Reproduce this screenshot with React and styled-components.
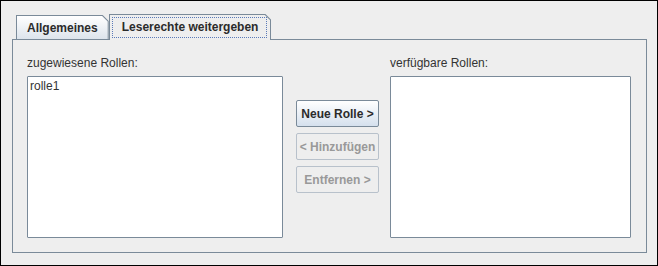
import styled, { createGlobalStyle } from "styled-components";

const GlobalStyle = createGlobalStyle`
  body {
    margin: 0;
    background: #eeeeee;
  }
`;

const Frame = styled.div`
  width: 658px;
  height: 266px;
  box-sizing: border-box;
  border: 1px solid #000;
  background: #eeeeee;
  padding: 12px 10px 12px 11px;
  display: flex;
  flex-direction: column;
  font-family: "Liberation Sans", Arial, sans-serif;
  font-size: 12px;
  color: #333333;
`;

const TabStrip = styled.div`
  height: 26px;
  display: flex;
  align-items: flex-end;
  padding-left: 4px;
  position: relative;
  z-index: 1;
`;

const Tab = styled.div`
  position: relative;
  box-sizing: border-box;
  height: ${({ $active }) => ($active ? "26px" : "24px")};
  margin-bottom: ${({ $active }) => ($active ? "-1px" : "0")};
  padding: 0 ${({ $active }) => ($active ? "13px" : "11px")};
  display: flex;
  align-items: center;
  font-weight: bold;
  color: #2b2b2b;
  background: #7a8a99;
  clip-path: polygon(0 0, calc(100% - 6px) 0, 100% 6px, 100% 100%, 0 100%);

  &::before {
    content: "";
    position: absolute;
    inset: 1px 1px 0 1px;
    background: ${({ $active }) =>
      $active ? "#eeeeee" : "linear-gradient(#ffffff, #dde4ec)"};
    clip-path: polygon(0 0, calc(100% - 5.6px) 0, 100% 5.6px, 100% 100%, 0 100%);
  }
`;

const TabLabel = styled.span`
  position: relative;
  padding-top: ${({ $active }) => ($active ? "0" : "2px")};
`;

const FocusBox = styled.span`
  position: absolute;
  z-index: 1;
  inset: 3px 4px 2px 3px;
  border: 1px dotted #5a7ab8;
  pointer-events: none;
`;

const Panel = styled.div`
  flex: 1;
  border: 1px solid #7a8a99;
  padding: 16px 15px 14px 14px;
  display: flex;
  gap: 13px;
`;

const Column = styled.div`
  width: ${({ $width }) => $width}px;
  display: flex;
  flex-direction: column;
  gap: 6px;
`;

const Label = styled.div`
  height: 14px;
  line-height: 14px;
`;

const ListBox = styled.div`
  flex: 1;
  background: #ffffff;
  border: 1px solid #7a8a99;
  border-radius: 1px;
  padding: 2px 2px;
  line-height: 15px;
  color: #333333;
`;

const ButtonColumn = styled.div`
  width: 83px;
  padding-top: 44px;
  margin-right: -2px;
  display: flex;
  flex-direction: column;
  gap: 6px;
`;

const Button = styled.button`
  height: 27px;
  box-sizing: border-box;
  width: 100%;
  padding: 0;
  font-family: inherit;
  font-size: 12px;
  font-weight: bold;
  border-radius: 2px;
  border: 1px solid ${({ disabled }) => (disabled ? "#b8c1cb" : "#7a8a99")};
  color: ${({ disabled }) => (disabled ? "#999999" : "#2b2b2b")};
  background: ${({ disabled }) =>
    disabled ? "#eeeeee" : "linear-gradient(#ffffff, #d5e0ed)"};
`;

export default function App() {
  return (
    <>
      <GlobalStyle />
      <Frame>
        <TabStrip>
          <Tab>
            <TabLabel>Allgemeines</TabLabel>
          </Tab>
          <Tab $active>
            <FocusBox />
            <TabLabel $active>Leserechte weitergeben</TabLabel>
          </Tab>
        </TabStrip>
        <Panel>
          <Column $width={256}>
            <Label>zugewiesene Rollen:</Label>
            <ListBox>rolle1</ListBox>
          </Column>
          <ButtonColumn>
            <Button>Neue Rolle &gt;</Button>
            <Button disabled>&lt; Hinzufügen</Button>
            <Button disabled>Entfernen &gt;</Button>
          </ButtonColumn>
          <Column $width={241}>
            <Label>verfügbare Rollen:</Label>
            <ListBox />
          </Column>
        </Panel>
      </Frame>
    </>
  );
}
